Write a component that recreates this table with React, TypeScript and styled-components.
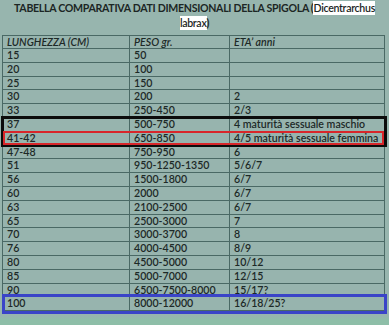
import React from "react";
import styled, { createGlobalStyle } from "styled-components";

const Global = createGlobalStyle`
  html, body { margin: 0; padding: 0; }
  body { background: #8fbca8; font-family: Lato, "Open Sans", sans-serif; }
`;

const Page = styled.div`
  width: 389px;
  height: 325px;
  background: linear-gradient(#97b5ae 0, #97b5ae 316px, #8ebea8 320px);
  overflow: hidden;
  position: relative;
`;

const Title = styled.h1`
  margin: 0;
  padding: 1px 0 0;
  height: 34.5px;
  box-sizing: border-box;
  text-align: center;
  font-size: 10.6px;
  line-height: 15px;
  font-weight: 700;
  color: #1c2624;
  letter-spacing: -0.3px;
  white-space: nowrap;
`;

const Hl = styled.span`
  background: #ffffff;
  font-weight: 600;
  padding: 1px 0;
`;

const TableWrap = styled.div`
  position: relative;
  margin: 0 4px 0 2px;
`;

const Grid = styled.div`
  display: grid;
  grid-template-columns: 126px 99px 1fr;
  grid-template-rows: 12.5px;
  grid-auto-rows: 12.8px;
  gap: 1px;
  background: #4a6965;
  border: 1px solid #4a6965;
`;

const Cell = styled.div<{ $head?: boolean }>`
  background: #97b4ae;
  padding-left: 4px;
  font-size: 10.6px;
  line-height: 13px;
  font-weight: 600;
  font-style: ${(p) => (p.$head ? "italic" : "normal")};
  color: #1d2927;
  white-space: nowrap;
  overflow: hidden;
`;

const Box = styled.div<{ $color: string; $w: number }>`
  position: absolute;
  border: ${(p) => p.$w}px solid ${(p) => p.$color};
  box-sizing: border-box;
  pointer-events: none;
`;

const rows: [string, string, string][] = [
  ["15", "50", ""],
  ["20", "100", ""],
  ["25", "150", ""],
  ["30", "200", "2"],
  ["33", "250-450", "2/3"],
  ["37", "500-750", "4 maturità sessuale maschio"],
  ["41-42", "650-850", "4/5 maturità sessuale femmina"],
  ["47-48", "750-950", "6"],
  ["51", "950-1250-1350", "5/6/7"],
  ["56", "1500-1800", "6/7"],
  ["60", "2000", "6/7"],
  ["63", "2100-2500", "6/7"],
  ["65", "2500-3000", "7"],
  ["70", "3000-3700", "8"],
  ["76", "4000-4500", "8/9"],
  ["80", "4500-5000", "10/12"],
  ["85", "5000-7000", "12/15"],
  ["90", "6500-7500-8000", "15/17?"],
  ["100", "8000-12000", "16/18/25?"],
];

export default function App() {
  return (
    <Page>
      <Global />
      <Title>
        TABELLA COMPARATIVA DATI DIMENSIONALI DELLA SPIGOLA (<Hl>Dicentrarchus</Hl>
        <br />
        <Hl>labrax</Hl>)
      </Title>
      <TableWrap>
        <Grid>
          <Cell $head>LUNGHEZZA (CM)</Cell>
          <Cell $head>PESO gr.</Cell>
          <Cell $head>ETA’ anni</Cell>
          {rows.map((r, i) => (
            <React.Fragment key={i}>
              <Cell>{r[0]}</Cell>
              <Cell>{r[1]}</Cell>
              <Cell>{r[2]}</Cell>
            </React.Fragment>
          ))}
        </Grid>
        <Box $color="#0c0c0c" $w={3} style={{ left: -1, right: -2, top: 81, height: 31 }} />
        <Box $color="#d8262a" $w={2.5} style={{ left: 1, right: 1, top: 96, height: 14 }} />
        <Box $color="#3a44c8" $w={3} style={{ left: 0, right: -2, top: 259, height: 20 }} />
      </TableWrap>
    </Page>
  );
}
